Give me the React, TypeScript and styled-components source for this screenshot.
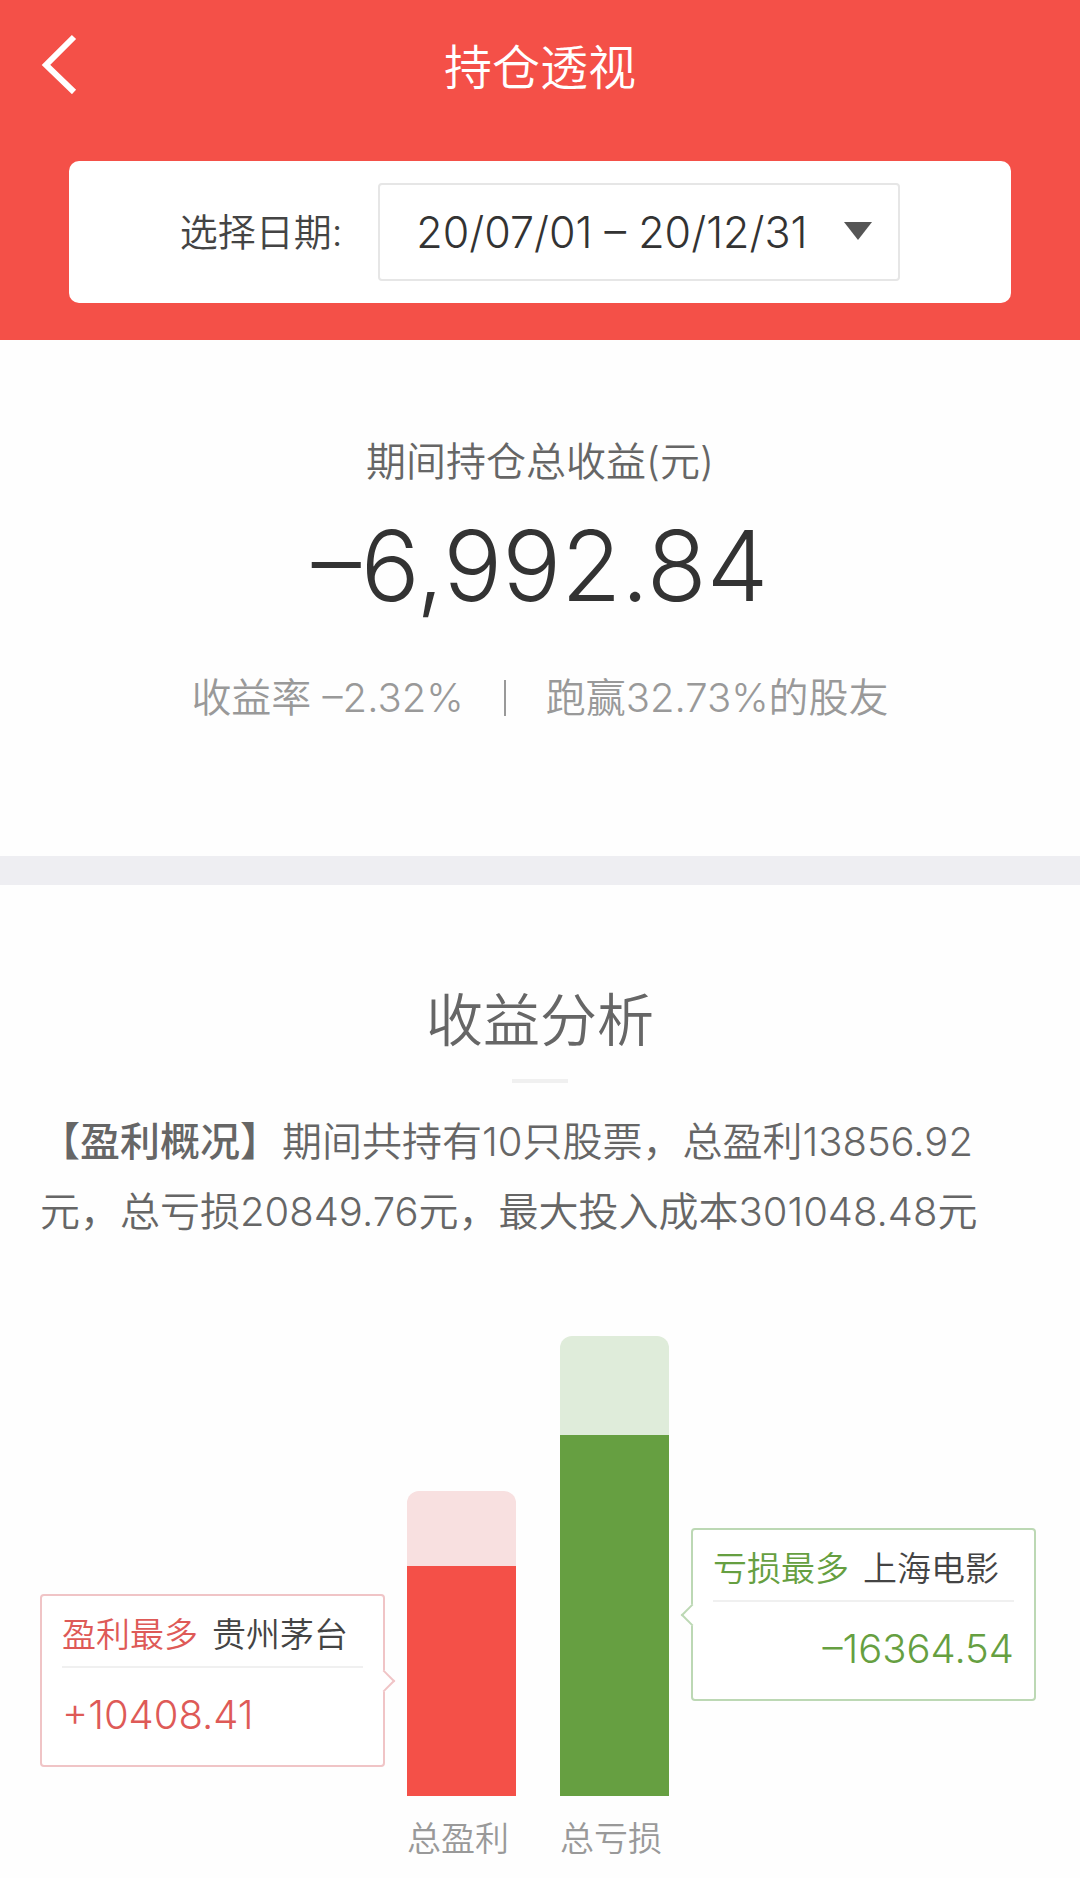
import React from 'react';
import styled, { createGlobalStyle } from 'styled-components';

const GlobalStyle = createGlobalStyle`
  *, *::before, *::after { box-sizing: border-box; }
  body {
    margin: 0;
    background: #fefefe;
    color: #666;
    font-family: Inter, "Noto Sans CJK SC", sans-serif;
    font-weight: 350;
  }
  h1, h2, p, dl, dt, dd, figure { margin: 0; font-weight: inherit; }
  button, select { font: inherit; color: inherit; }
`;

const Header = styled.header`
  background: #f45048;
  padding: 24px 69px 37px;
`;

const TitleBar = styled.div`
  display: grid;
  grid-template-columns: 60px 1fr 60px;
  align-items: center;
  height: 80px;
  margin: 0 -40px 57px;
`;

const BackButton = styled.button`
  display: flex;
  align-items: center;
  height: 80px;
  padding: 0 0 0 12px;
  border: 0;
  background: none;
  color: #fff;
  cursor: pointer;
`;

const PageTitle = styled.h1`
  padding-top: 8px;
  color: #fff;
  font-size: 48px;
  line-height: 72px;
  text-align: center;
`;

const DateCard = styled.form`
  display: flex;
  align-items: center;
  justify-content: center;
  gap: 36px;
  height: 142px;
  border-radius: 10px;
  background: #fff;
  color: #444;
`;

const DateLabel = styled.label`
  font-size: 38px;
  line-height: 56px;
`;

const SelectBox = styled.div`
  position: relative;
  display: flex;
  width: 522px;
`;

const DateSelect = styled.select`
  appearance: none;
  width: 100%;
  height: 98px;
  padding: 0 64px 0 36px;
  border: 2px solid #e6e6e6;
  border-radius: 4px;
  background: #fff;
  color: #333;
  font-size: 43px;
`;

const SelectArrow = styled.svg`
  position: absolute;
  top: 50%;
  right: 28px;
  margin-top: -10px;
  pointer-events: none;
`;

const Summary = styled.section`
  display: flex;
  flex-direction: column;
  align-items: center;
  padding: 92px 40px 128px;
`;

const SummaryLabel = styled.h2`
  font-size: 40px;
  line-height: 60px;
`;

const SummaryValue = styled.p`
  margin: 14px 0 42px;
  color: #333;
  font-size: 98px;
  line-height: 120px;
`;

const SummaryMeta = styled.p`
  display: flex;
  align-items: center;
  gap: 40px;
  color: #999;
  font-size: 40px;
  line-height: 60px;
`;

const MetaDivider = styled.span`
  width: 2px;
  height: 36px;
  background: #999;
`;

const Analysis = styled.section`
  border-top: 29px solid #eeeef2;
  padding: 96px 0 16px;
`;

const SectionTitle = styled.h2`
  font-size: 57px;
  line-height: 80px;
  text-align: center;

  &::after {
    content: "";
    display: block;
    width: 56px;
    height: 4px;
    margin: 18px auto 24px;
    background: #f0f0f0;
  }
`;

const Overview = styled.p`
  padding: 0 70px 0 40px;
  font-size: 40px;
  line-height: 70px;
`;

const OverviewTag = styled.strong`
  margin-right: 2px;
  font-weight: 500;
`;

const Chart = styled.figure`
  display: grid;
  grid-template-columns: 1fr 109px 109px 1fr;
  column-gap: 44px;
  align-items: end;
  margin-top: 89px;
  padding: 0 44px 0 40px;
`;

const Bar = styled.div<{ $tint: string; $total: number }>`
  display: flex;
  align-items: flex-end;
  height: ${p => p.$total}px;
  border-radius: 12px 12px 0 0;
  overflow: hidden;
  background: ${p => p.$tint};
`;

const BarFill = styled.div<{ $color: string; $size: number }>`
  width: 100%;
  height: ${p => p.$size}px;
  background: ${p => p.$color};
`;

const BarLabel = styled.div<{ $column: number }>`
  grid-row: 2;
  grid-column: ${p => p.$column};
  padding-top: 18px;
  color: #999;
  font-size: 34px;
  line-height: 50px;
`;

const Callout = styled.dl<{ $side: 'left' | 'right'; $line: string; $raise: number }>`
  position: relative;
  height: 173px;
  margin: 0 ${p => (p.$side === 'left' ? '-22px' : '0')} ${p => p.$raise}px ${p => (p.$side === 'right' ? '-22px' : '0')};
  padding: 12px 20px;
  border: 2px solid ${p => p.$line};
  border-radius: 4px;
  background: #fff;
  text-align: ${p => p.$side};

  &::after {
    content: "";
    position: absolute;
    top: 50%;
    ${p => (p.$side === 'left' ? 'right' : 'left')}: -9px;
    width: 16px;
    height: 16px;
    margin-top: -8px;
    border: solid ${p => p.$line};
    border-width: 2px 2px 0 0;
    background: #fff;
    transform: rotate(${p => (p.$side === 'left' ? 45 : 225)}deg);
  }
`;

const CalloutHead = styled.dt<{ $color: string }>`
  display: flex;
  gap: 14px;
  height: 60px;
  border-bottom: 2px solid #f0f0f0;
  color: ${p => p.$color};
  font-size: 34px;
  line-height: 54px;
  white-space: nowrap;
`;

const StockName = styled.span`
  color: #444;
`;

const CalloutValue = styled.dd<{ $color: string }>`
  padding-top: 20px;
  color: ${p => p.$color};
  font-size: 40px;
  line-height: 54px;
`;

const RED = '#f45048';
const GREEN = '#669f41';

export default function App() {
  return (
    <>
      <GlobalStyle />
      <Header>
        <TitleBar>
          <BackButton type="button" aria-label="返回">
            <svg width="36" height="60" viewBox="0 0 36 60" fill="none" stroke="currentColor" strokeWidth="6">
              <path d="M33 3L5 31L33 58" />
            </svg>
          </BackButton>
          <PageTitle>持仓透视</PageTitle>
        </TitleBar>
        <DateCard>
          <DateLabel htmlFor="range">选择日期:</DateLabel>
          <SelectBox>
            <DateSelect id="range">
              <option>20/07/01 – 20/12/31</option>
            </DateSelect>
            <SelectArrow width="28" height="18" viewBox="0 0 28 18" fill="#555" aria-hidden="true">
              <path d="M0 0H28L14 18Z" />
            </SelectArrow>
          </SelectBox>
        </DateCard>
      </Header>

      <main>
        <Summary>
          <SummaryLabel>期间持仓总收益(元)</SummaryLabel>
          <SummaryValue>–6,992.84</SummaryValue>
          <SummaryMeta>
            <span>收益率 –2.32%</span>
            <MetaDivider />
            <span>跑赢32.73%的股友</span>
          </SummaryMeta>
        </Summary>

        <Analysis>
          <SectionTitle>收益分析</SectionTitle>
          <Overview>
            <OverviewTag>【盈利概况】</OverviewTag>
            期间共持有10只股票，总盈利13856.92元，总亏损20849.76元，最大投入成本301048.48元
          </Overview>

          <Chart>
            <Callout $side="left" $line="#f0c4c6" $raise={29}>
              <CalloutHead $color="#de5a57">
                盈利最多 <StockName>贵州茅台</StockName>
              </CalloutHead>
              <CalloutValue $color="#de5a57">+10408.41</CalloutValue>
            </Callout>
            <Bar $tint="#f8e0e0" $total={305}>
              <BarFill $color={RED} $size={230} />
            </Bar>
            <Bar $tint="#dfecda" $total={460}>
              <BarFill $color={GREEN} $size={361} />
            </Bar>
            <Callout $side="right" $line="#bcd8b4" $raise={95}>
              <CalloutHead $color={GREEN}>
                亏损最多 <StockName>上海电影</StockName>
              </CalloutHead>
              <CalloutValue $color={GREEN}>–16364.54</CalloutValue>
            </Callout>
            <BarLabel $column={2}>总盈利</BarLabel>
            <BarLabel $column={3}>总亏损</BarLabel>
          </Chart>
        </Analysis>
      </main>
    </>
  );
}
